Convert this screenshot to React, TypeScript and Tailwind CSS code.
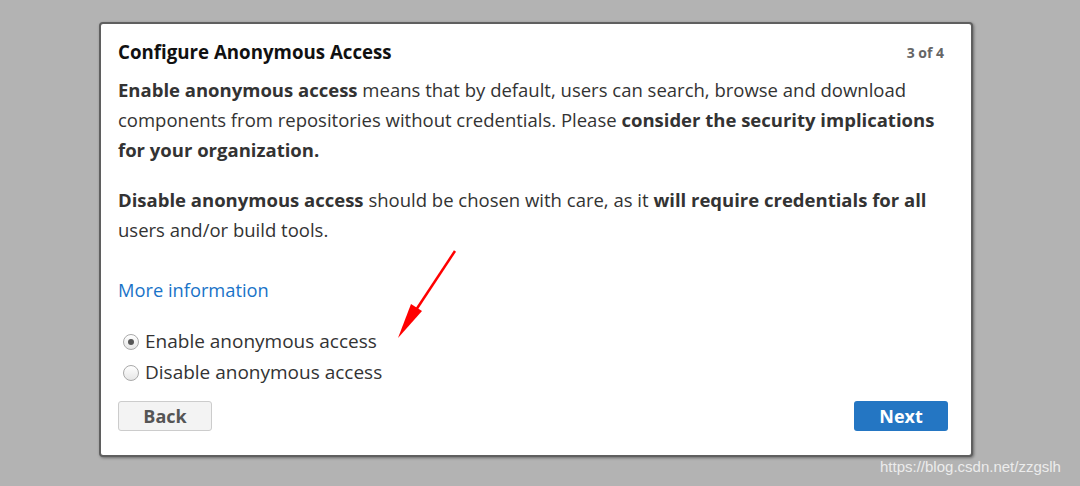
import React from "react";

function Radio({ checked }: { checked?: boolean }) {
  return (
    <span className="w-[16px] h-[16px] rounded-full border border-[#a9a9a9] bg-gradient-to-b from-[#ffffff] to-[#e6e6e6] flex items-center justify-center shrink-0">
      {checked && <span className="w-[6px] h-[6px] rounded-full bg-[#555]" />}
    </span>
  );
}

export default function App() {
  return (
    <div className="w-[1080px] h-[486px] bg-[#b3b3b3] relative overflow-hidden" style={{ fontFamily: "'Open Sans', 'Liberation Sans', sans-serif" }}>
      <div className="pt-[22px] pl-[99px]">
        <div className="w-[874px] h-[435px] bg-white border-[2px] border-[#5f5f5f] rounded-[4px] shadow-[1px_1px_3px_rgba(0,0,0,0.4)] px-[17px] pt-[14px] flex flex-col">
          <div className="flex items-center justify-between h-[28px]">
            <div className="text-[18.7px] font-bold text-[#111]">Configure Anonymous Access</div>
            <div className="text-[14px] font-bold text-[#666] mr-[10px]">3 of 4</div>
          </div>
          <div className="text-[18.5px] leading-[30px] text-[#333] mt-[9px]">
            <p><b>Enable anonymous access</b> means that by default, users can search, browse and download components from repositories without credentials. Please <b>consider the security implications for your organization.</b></p>
            <p className="mt-[20px]"><b>Disable anonymous access</b> should be chosen with care, as it <b>will require credentials for all</b> users and/or build tools.</p>
            <p className="mt-[30px] text-[#1a73c8] text-[18.3px]">More information</p>
          </div>
          <div className="mt-[21px] flex flex-col text-[19px] text-[#333]">
            <label className="flex items-center gap-[6px] h-[31px] pl-[5px]"><Radio checked />Enable anonymous access</label>
            <label className="flex items-center gap-[6px] h-[31px] pl-[5px]"><Radio />Disable anonymous access</label>
          </div>
          <div className="flex justify-between mt-[13px] pr-[6px]">
            <button className="w-[94px] h-[30px] bg-[#f3f3f3] border border-[#cccccc] rounded-[3px] text-[18px] font-bold text-[#555]">Back</button>
            <button className="w-[94px] h-[30px] bg-[#2476c3] rounded-[3px] text-[18px] font-bold text-white">Next</button>
          </div>
        </div>
      </div>
      <svg className="absolute left-0 top-0" width="1080" height="486">
        <line x1="455" y1="251" x2="414" y2="313" stroke="#ff0000" strokeWidth="2.5" />
        <polygon points="398,338 411,304 422,311" fill="#ff0000" />
      </svg>
      <div className="absolute left-[880px] top-[456px] text-[15px] text-[#ececec]" style={{ fontFamily: "'Liberation Sans', sans-serif" }}>https://blog.csdn.net/zzgslh</div>
    </div>
  );
}
